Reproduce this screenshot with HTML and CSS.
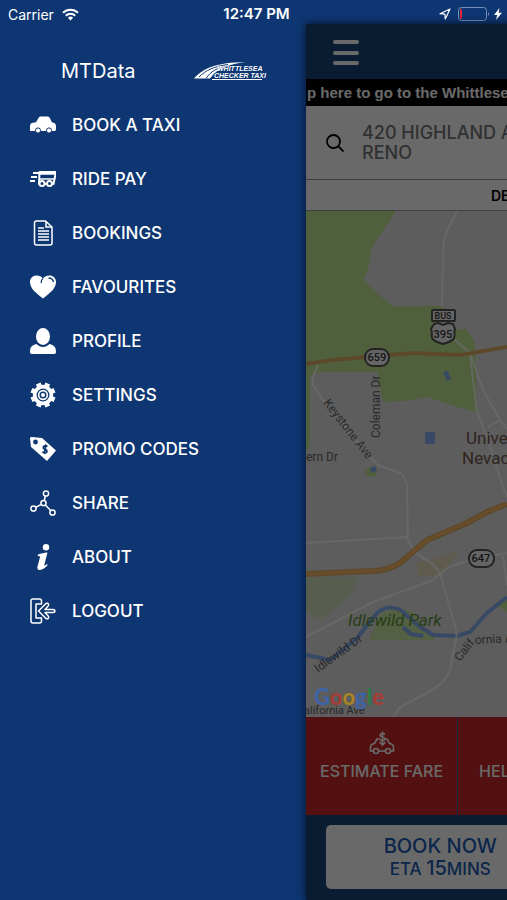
FILE: index.html
```html
<!DOCTYPE html>
<html lang="en">
<head>
    <meta charset="UTF-8">
    <meta name="viewport" content="width=device-width, initial-scale=1.0">
    <title>MTData Taxi</title>
    <link rel="stylesheet" href="styles.css">
</head>
<body>

    <!-- Status Bar -->
    <header class="status-bar">
        <div class="status-left">
            <span>Carrier</span>
            <svg class="wifi" viewBox="0 0 17 13" fill="none" stroke="#fff" stroke-width="2">
                <path d="M1 4.8a10.6 10.6 0 0 1 15 0"/>
                <path d="M3.8 7.7a6.6 6.6 0 0 1 9.4 0"/>
                <path d="M8.5 12.4L5.9 9.8a3.7 3.7 0 0 1 5.2 0z" fill="#fff" stroke="none"/>
            </svg>
        </div>
        <strong class="clock">12:47 PM</strong>
        <div class="status-right">
            <svg class="location" viewBox="0 0 12 12"><path d="M11 1L1 5.7l4.9.4.4 4.9z" fill="none" stroke="#fff" stroke-width="1.2" stroke-linejoin="round"/></svg>
            <svg class="battery" viewBox="0 0 32 14">
                <rect x="0.5" y="0.5" width="28" height="13" rx="3" fill="none" stroke="#7690b8"/>
                <rect x="2" y="2" width="2" height="10" rx="1" fill="#e0243c"/>
                <path d="M30 5a2.5 2.5 0 0 1 0 4z" fill="#7690b8"/>
            </svg>
            <svg class="bolt" viewBox="0 0 8 12"><path d="M5.5 0L0 7h3.2L2 12l6-7.2H4.6z" fill="#fff"/></svg>
        </div>
    </header>

    <div class="screen">

        <!-- Side Menu -->
        <aside class="menu">
            <div class="brand">
                <h1>MTData</h1>
                <svg class="brand-logo" viewBox="0 0 76 20" role="img" aria-label="Whittlesea Checker Taxi">
                    <path d="M0 17.5C10 7 22 1.5 52 1 38 3 24 6 16 17.5z" fill="#fff"/>
                    <path d="M5 16C12 9 20 5.5 34 3.5M12 17.5C17 10 23 7 32 5.5" fill="none" stroke="#0e3672" stroke-width="1"/>
                    <text x="23" y="10" class="logo-text">WHITTLESEA</text>
                    <text x="20" y="17" class="logo-text">CHECKER TAXI</text>
                    <path d="M18 18.5h50" stroke="#fff" stroke-width="1"/>
                </svg>
            </div>

            <nav>
                <a href="#book">
                    <svg viewBox="0 0 26 26" fill="#fff">
                        <path d="M0 19v-5c0-2 1-3 3-3.200l3-.6L8.500 6C9 5 9.500 4.500 11 4.500h6c1.500 0 2.500.6 3 1.800l1.800 4c3 .4 4.200 1.700 4.200 4V17c0 1.500-.5 2-2 2z"/>
                        <circle cx="8" cy="18.5" r="2.6" stroke="#0e3672"/>
                        <circle cx="19" cy="18.5" r="2.6" stroke="#0e3672"/>
                    </svg>
                    BOOK A TAXI
                </a>
                <a href="#pay">
                    <svg viewBox="0 0 26 26" fill="none" stroke="#fff" stroke-width="2">
                        <path d="M9.5 6H26l-2.5 12H9z" stroke-linejoin="round"/>
                        <path d="M10 7.5h15" stroke-width="2.5"/>
                        <path d="M3 7h6M1 11h6M0 15h5" stroke-width="1.8"/>
                        <path d="M9 13h15" stroke-width="1.5"/>
                        <circle cx="12" cy="17.5" r="2.5" fill="#0e3672"/>
                        <circle cx="19.5" cy="17.5" r="2.5" fill="#0e3672"/>
                    </svg>
                    RIDE PAY
                </a>
                <a href="#bookings">
                    <svg viewBox="0 0 26 26" fill="none" stroke="#fff" stroke-width="1.5">
                        <path d="M6.5 1h9L22 7v16a2 2 0 0 1-2 2H6.500a2 2 0 0 1-2-2V3a2 2 0 0 1 2-2z"/>
                        <path d="M16 1v6h6M8 8h6M8 11h11M8 14h11M8 17h11M8 20h11"/>
                    </svg>
                    BOOKINGS
                </a>
                <a href="#favourites">
                    <svg viewBox="0 0 26 26">
                        <path d="M13 24.5C6 19 0 14.5 0 8c0-4 3-6.500 6.500-6.500 3 0 5 1 6.500 3 1.500-2 3.500-3 6.500-3C23 1.500 26 4 26 8c0 6.500-6 11-13 16.500z" fill="#fff"/>
                        <path d="M13 4.5c-1.500 1-2 2.500-1.800 4.500M18.500 4c2.500 0 4.500 1.500 5 4" fill="none" stroke="#0e3672" stroke-width="1.3"/>
                    </svg>
                    FAVOURITES
                </a>
                <a href="#profile">
                    <svg viewBox="0 0 26 26" fill="#fff">
                        <ellipse cx="13" cy="8.5" rx="7" ry="8.5"/>
                        <path d="M6.5 16c2 2 4 3 6.500 3s4.500-1 6.500-3c4.500 1 6.500 3 6.500 8 0 1-.5 2-1.800 2H1.800C.5 26 0 25 0 24c0-5 2-7 6.500-8z"/>
                    </svg>
                    PROFILE
                </a>
                <a href="#settings">
                    <svg viewBox="0 0 26 26">
                        <circle cx="13" cy="13" r="10.2" fill="#fff"/>
                        <path d="M13 .5v25M.5 13h25M4.200 4.200l17.600 17.600M21.800 4.200L4.200 21.800" stroke="#fff" stroke-width="5" transform="rotate(22.5 13 13)"/>
                        <circle cx="13" cy="13" r="5.8" fill="none" stroke="#0e3672" stroke-width="1.3"/>
                        <circle cx="13" cy="13" r="2.8" fill="none" stroke="#0e3672" stroke-width="1.5"/>
                    </svg>
                    SETTINGS
                </a>
                <a href="#promo">
                    <svg viewBox="0 0 26 26">
                        <path d="M0 2.5C0 1.5.5 1 1.500 1L12 2l14 12.500L17 25 1 11z" fill="#fff"/>
                        <circle cx="5.5" cy="6" r="2.4" fill="#0e3672"/>
                        <path d="M17.5 10.500c-1.500-1.500-4.500-.5-4.200 1.300.3 2 3.700 1.200 3.700 3.400 0 1.800-3.200 2.300-4.700.6M16 8.500l-1.800 9.500" fill="none" stroke="#0e3672" stroke-width="1.7"/>
                    </svg>
                    PROMO CODES
                </a>
                <a href="#share">
                    <svg viewBox="0 0 26 26" fill="none" stroke="#fff" stroke-width="1.5">
                        <circle cx="16" cy="3.5" r="2.6"/>
                        <circle cx="13.5" cy="13" r="2.6"/>
                        <circle cx="3.5" cy="18.5" r="2.6"/>
                        <circle cx="22.5" cy="22.5" r="2.6"/>
                        <path d="M15.4 6l-1.200 4.500M11.200 14.300l-5.400 3M15.400 14.900l5.200 5.700"/>
                    </svg>
                    SHARE
                </a>
                <a href="#about">
                    <svg viewBox="0 0 26 26" fill="#fff">
                        <circle cx="16" cy="3.2" r="3.2"/>
                        <path d="M8 10.500c3-1 6-1.800 9.500-2l-3.200 12.500c-.2 1 .8.6 2.700-1l.7.900c-2.500 2.800-5 5-8 5-2 0-2.700-1.500-2.200-3.400l2.500-9.300c.2-1-.6-1.200-2.400-1.300z"/>
                    </svg>
                    ABOUT
                </a>
                <a href="#logout">
                    <svg viewBox="0 0 26 26" fill="none" stroke="#fff" stroke-width="1.5" stroke-linejoin="round">
                        <path d="M11.500 6V3a2 2 0 0 0-2-2H3a2 2 0 0 0-2 2v20a2 2 0 0 0 2 2h6.500a2 2 0 0 0 2-2v-3H6V6z"/>
                        <path d="M8.500 13l7.500-7.500c2-1 3.500 1 2.200 2.500L15 11.500h8c2.500 0 2.500 3 0 3h-8l3.200 3.500c1.300 1.500-.2 3.500-2.200 2.500z"/>
                    </svg>
                    LOGOUT
                </a>
            </nav>
        </aside>

        <!-- Booking Page, pushed aside by the menu -->
        <main class="page">
            <div class="page-header">
                <button type="button" class="menu-toggle" aria-label="Menu"><span></span><span></span><span></span></button>
            </div>
            <a class="ticker" href="#website">p here to go to the Whittlesea</a>
            <div class="pickup">
                <svg viewBox="0 0 18 18" fill="none" stroke="#000" stroke-width="1.8"><circle cx="7.5" cy="7.5" r="6.5"/><path d="M12 12l5.500 5.500"/></svg>
                <p>420 HIGHLAND AVE<br>RENO</p>
            </div>
            <div class="destination">DESTINATION</div>

            <svg class="map" viewBox="0 0 507 506" preserveAspectRatio="xMinYMin slice">
                <!-- Parks -->
                <g fill="#c4ea92">
                    <path d="M0 0h90L66 36l-4 23-5 10 29 26h50v24l24-1 9 14 2 69-20-5-30-10-22 4-22 1-6-30H14L4 165v70l-4 5z"/>
                    <path d="M0 366h54l-10 20-30 23-14-8z" opacity=".4"/>
                    <path d="M74 404c8-6 24-8 34-2l10 14 10 8v5H63z" opacity=".8"/>
                    <path d="M58 261l7-6 7 2-2 8-8 1z"/>
                    <path d="M192 395l9-8v14z"/>
                </g>
                <path d="M110 352l45-13-20 25-22 2z" fill="#f0d890" opacity=".4"/>
                <!-- Water -->
                <g fill="none" stroke="#86b2f5" stroke-width="4">
                    <path d="M0 444l24 5 27-22 20-25c10-8 20-6 26-1l17 15 13 8 24 1 13-4 17-19 20-16"/>
                    <path d="M97 416l8 7 12 2"/>
                </g>
                <g fill="#86b2f5">
                    <rect x="119" y="221" width="10" height="12" rx="2"/>
                    <path d="M137 161l5-1 3 8-4 2z"/>
                    <path d="M64 257l5-2 2 5-6 2z"/>
                </g>
                <!-- Streets -->
                <g fill="none" stroke="#fff" stroke-opacity=".8" stroke-width="2">
                    <path d="M151 0l-9 18c-4 9-5 14-5 25l-1 53M149 129l15 13 13 37 17 30 7 9M164 142l3 27 4 32 10 25 16 50 4 10M182 216l12-7"/>
                    <path d="M12 154l-5 12v8l10 15 47 57 8 8 22 8c6 4 6 9 7 14l1 53 4 8 13 12"/>
                    <path d="M0 332l102-6M109 342c12 6 20 12 25 20l17 60-7 37c-4 12-14 18-23 23l-27 14-7 10"/>
                    <path d="M0 426l67-35 60-22 14-12 23-8 37-7M197 345l4 30"/>
                </g>
                <g fill="none" stroke="#e0b068" stroke-width="4">
                    <path d="M0 153l27-4 44-4 36-3 47 2 47-8"/>
                    <path d="M201 293l-20 8-20 11-40 17-27 23c-10 6-20 8-27 8L0 363" stroke-width="6"/>
                </g>
                <path d="M201 293l-20 8-20 11-40 17-27 23c-10 6-20 8-27 8L0 363" fill="none" stroke="#ffbc66" stroke-width="3"/>
                <!-- Route shields -->
                <g fill="#f5f5f5" stroke="#555" stroke-width="2">
                    <rect x="59" y="138" width="24" height="17" rx="8"/>
                    <rect x="163" y="339" width="25" height="17" rx="8"/>
                    <rect x="126" y="99" width="23" height="11" rx="1"/>
                    <path d="M128 113l4-1 5 2 5-2 5 1 2 5c-2 3 1 6-1 9-2 4-6 4-11 6-5-2-9-2-11-6-1-3 1-6-1-9z"/>
                </g>
                <g class="shield-text">
                    <text x="71" y="150">659</text>
                    <text x="175" y="351">647</text>
                    <text x="137" y="127">395</text>
                    <text x="137" y="108" class="bus">BUS</text>
                </g>
                <!-- Street names -->
                <g class="street-text">
                    <text transform="translate(17 192) rotate(52)">Keystone Ave</text>
                    <text transform="translate(74 227) rotate(-90)">Coleman Dr</text>
                    <text x="0" y="250">ern Dr</text>
                    <text transform="translate(12 462) rotate(-36)">Idlewild Dr</text>
                    <text transform="translate(154 451) rotate(-52)">Calif</text>
                    <text transform="translate(169 433) rotate(-3)">ornia Ave</text>
                    <text x="-2" y="503" class="small">alifornia Ave</text>
                </g>
                <text x="160" y="233" class="place-text">University of</text>
                <text x="156" y="253" class="place-text">Nevada, Reno</text>
                <text x="42" y="415" class="park-text">Idlewild Park</text>
            </svg>

            <div class="actions">
                <button type="button">
                    <svg viewBox="0 0 26 24" fill="none" stroke="#fff" stroke-width="1.6">
                        <path d="M4.5 20H1.500v-4c0-2 1-3 4-3.500L8 8h3M16 8h2l2.500 4.500c3 .5 4 1.500 4 3.500v4H21.500M9.500 20h7"/>
                        <circle cx="7" cy="20" r="2.5"/>
                        <circle cx="19" cy="20" r="2.5"/>
                        <path d="M16 3.500c-2-2-5-1-5 .8 0 2 5 1.200 5 3.500 0 2-3.500 2.500-5 .7M13.500.5v13M10.500 11l3 3 3-3"/>
                    </svg>
                    ESTIMATE FARE
                </button>
                <button type="button" class="help">HELP</button>
            </div>
            <div class="page-footer">
                <button type="button" class="book">BOOK NOW<small>ETA <b>15</b>MINS</small></button>
                <button type="button" class="book">BOOK LATER</button>
            </div>
            <div class="scrim"></div>
            <div class="google"><span class="g-blue">G</span><span class="g-red">o</span><span class="g-yellow">o</span><span class="g-blue">g</span><span class="g-green">l</span><span class="g-red">e</span></div>
        </main>
    </div>

</body>
</html>
```
FILE: styles.css
```css
* {
    box-sizing: border-box;
    margin: 0;
    padding: 0;
}
body {
    font-family: Inter, "Liberation Sans", sans-serif;
    background-color: #0e3672;
    color: #fff;
    height: 100vh;
    display: flex;
    flex-direction: column;
    overflow: hidden;
}
button {
    font-family: inherit;
    border: none;
    cursor: pointer;
}
a {
    color: inherit;
    text-decoration: none;
}
svg {
    flex: none;
}

/* Status bar */
.status-bar {
    display: grid;
    grid-template-columns: 1fr auto 1fr;
    align-items: center;
    height: 24px;
    padding: 4px 5px 0 8px;
    font-size: 14px;
    flex: none;
}
.status-left,
.status-right {
    display: flex;
    align-items: center;
    gap: 8px;
}
.status-right {
    justify-content: flex-end;
    gap: 4px;
}
.clock {
    padding-left: 3px;
    font-size: 15px;
    font-weight: 600;
    line-height: 20px;
}
.wifi {
    width: 17px;
    height: 13px;
}
.location {
    width: 12px;
    height: 12px;
    margin-right: 3px;
}
.battery {
    width: 32px;
    height: 14px;
}
.bolt {
    width: 8px;
    height: 12px;
}

.screen {
    display: flex;
    flex: 1;
    min-height: 0;
    overflow: hidden;
    /* leaves room for the page shadow over the status bar */
    margin-top: -8px;
    padding-top: 8px;
}

/* Side menu */
.menu {
    width: 306px;
    flex: none;
}
.brand {
    display: flex;
    align-items: center;
    justify-content: space-between;
    height: 74px;
    padding: 20px 36px 0 61px;
}
.brand h1 {
    font-size: 20px;
    font-weight: 400;
}
.brand-logo {
    width: 76px;
    height: 20px;
}
.logo-text {
    font: italic bold 7px "Liberation Sans", sans-serif;
    fill: #fff;
}
.menu nav a {
    display: flex;
    align-items: center;
    gap: 16px;
    height: 54px;
    padding-left: 30px;
    font-size: 17px;
    font-weight: 500;
}
.menu nav svg {
    width: 26px;
    height: 26px;
}

/* Booking page */
.page {
    position: relative;
    display: flex;
    flex-direction: column;
    flex: none;
    width: 100vw;
    background-color: #184479;
    box-shadow: 0 0 8px rgba(0, 0, 0, 0.7);
}
.page-header {
    height: 55px;
    padding: 16px 27px;
}
.menu-toggle {
    display: flex;
    flex-direction: column;
    justify-content: space-between;
    width: 26px;
    height: 25px;
    background: none;
}
.menu-toggle span {
    width: 100%;
    height: 4px;
    border-radius: 2px;
    background-color: #fff;
}
.ticker {
    height: 27px;
    padding-left: 1px;
    line-height: 28px;
    background-color: #000;
    font-family: "Liberation Sans", sans-serif;
    font-size: 15px;
    font-weight: bold;
    white-space: nowrap;
}
.pickup {
    display: flex;
    align-items: center;
    gap: 18px;
    height: 74px;
    padding-left: 20px;
    background-color: #fff;
    border-bottom: 1px solid #999;
    color: #777;
    font-size: 18px;
    font-weight: 500;
    line-height: 20px;
}
.pickup svg {
    width: 18px;
    height: 18px;
}
.destination {
    height: 31px;
    padding-left: 185px;
    line-height: 32px;
    background-color: #fff;
    border-bottom: 1px solid #999;
    color: #000;
    font-size: 14px;
    font-weight: 600;
}

/* Map */
.map {
    flex: 1 1 0;
    min-height: 0;
    width: 100%;
    background-color: #e2e2e2;
}
.shield-text {
    font: 500 11px Roboto, sans-serif;
    fill: #333;
    text-anchor: middle;
}
.shield-text .bus {
    font-size: 9px;
}
.street-text {
    font: 12px Roboto, sans-serif;
    fill: #666;
}
.street-text .small {
    font-size: 11px;
}
.place-text {
    font: 17px Roboto, sans-serif;
    fill: #75584b;
}
.park-text {
    font: italic 17px Roboto, sans-serif;
    fill: #5a9638;
}
.google {
    position: absolute;
    left: 8px;
    bottom: 192px;
    font-family: Lato, sans-serif;
    font-size: 22px;
    font-weight: bold;
    line-height: 22px;
}
.g-blue {
    color: #3b64ac;
}
.g-red {
    color: #a83a34;
}
.g-yellow {
    color: #a98420;
}
.g-green {
    color: #2c7c42;
}

/* Actions */
.actions {
    display: flex;
    height: 98px;
    background-color: #c8282a;
}
.actions button {
    display: flex;
    flex-direction: column;
    align-items: center;
    gap: 6px;
    width: 30%;
    padding-top: 14px;
    background: none;
    border-right: 1px solid #3c64b4;
    color: #fff;
    font-size: 16px;
    font-weight: 500;
    line-height: 20px;
    white-space: nowrap;
}
.actions svg {
    width: 26px;
    height: 24px;
}
.actions .help {
    align-items: flex-start;
    padding: 44px 0 0 21px;
}

/* Footer */
.page-footer {
    display: flex;
    gap: 10px;
    height: 85px;
    padding: 10px 20px 11px;
}
.book {
    flex: 1;
    border-radius: 5px;
    background-color: #fff;
    color: #1c5cb4;
    font-size: 20px;
    font-weight: 500;
    line-height: 22px;
}
.book small {
    display: block;
    font-size: 17px;
}
.book b {
    font-size: 20px;
    font-weight: 500;
}

/* Dims the page while the menu is open */
.scrim {
    position: absolute;
    inset: 0;
    background-color: rgba(0, 0, 0, 0.59);
}
```
